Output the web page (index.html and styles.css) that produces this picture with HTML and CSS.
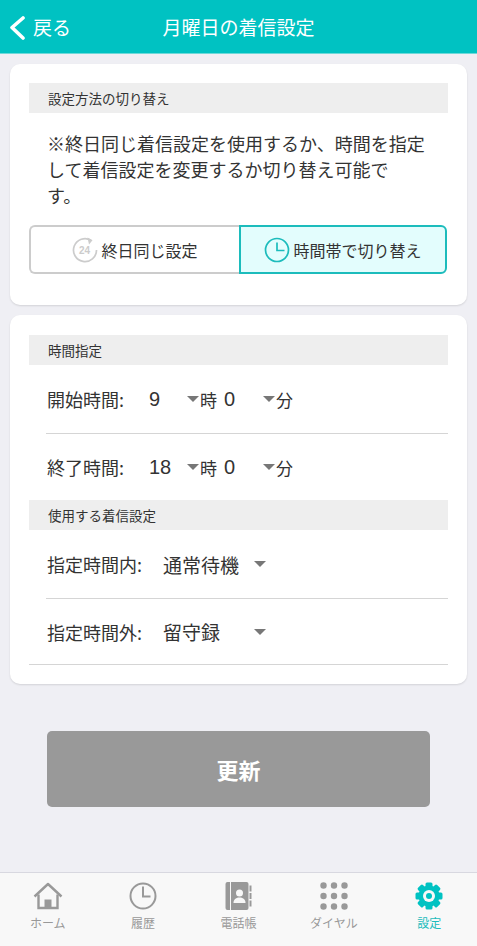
FILE: index.html
```html
<!DOCTYPE html>
<html lang="ja">
<head>
<meta charset="utf-8">
<title>月曜日の着信設定</title>
<link rel="stylesheet" href="styles.css">
</head>
<body>
<div class="app">
  <header class="topbar">
    <a class="back">
      <svg class="back-icon" width="16" height="26" viewBox="0 0 16 26"><path d="M14 4 3 13.500 14 24" fill="none" stroke="#fff" stroke-width="3.600" stroke-linecap="round" stroke-linejoin="round"/></svg>
      <span>戻る</span>
    </a>
    <h1 class="title">月曜日の着信設定</h1>
  </header>
  <main class="content">
    <section class="card card-mode">
      <h2 class="section-head">設定方法の切り替え</h2>
      <p class="note">※終日同じ着信設定を使用するか、時間を指定<br>して着信設定を変更するか切り替え可能で<br>す。</p>
      <div class="segment">
        <div class="seg seg-off">
          <svg width="26" height="26" viewBox="0 0 26 26"><path d="M19 3.300A11.500 11.500 0 1 0 24.500 13" fill="none" stroke="#ccc" stroke-width="1.700"/><path d="M15.500 0.500 20.500 3.300 17 7.500z" fill="#ccc"/><text x="12.500" y="17" class="icon-24">24</text></svg>
          <span>終日同じ設定</span>
        </div>
        <div class="seg seg-on">
          <svg width="26" height="26" viewBox="0 0 26 26"><circle cx="13" cy="13" r="11.500" fill="none" stroke="#1cbcbc" stroke-width="1.700"/><path d="M13 5.500V13.500h7.500" fill="none" stroke="#1cbcbc" stroke-width="1.700"/></svg>
          <span>時間帯で切り替え</span>
        </div>
      </div>
    </section>
    <section class="card card-time">
      <h2 class="section-head">時間指定</h2>
      <div class="row row-time">
        <span class="label">開始時間:</span>
        <span class="val val-num">9</span><i class="caret"></i><span class="unit">時</span>
        <span class="val val-min">0</span><i class="caret"></i><span class="unit">分</span>
      </div>
      <div class="row row-time row-last">
        <span class="label">終了時間:</span>
        <span class="val val-num">18</span><i class="caret"></i><span class="unit">時</span>
        <span class="val val-min">0</span><i class="caret"></i><span class="unit">分</span>
      </div>
      <h2 class="section-head">使用する着信設定</h2>
      <div class="row row-use">
        <span class="label label-use">指定時間内:</span>
        <span class="val val-mode">通常待機</span><i class="caret"></i>
      </div>
      <div class="row row-use row-out">
        <span class="label label-use">指定時間外:</span>
        <span class="val val-mode">留守録</span><i class="caret"></i>
      </div>
    </section>
    <div class="action"><button class="update">更新</button></div>
  </main>
  <nav class="tabbar">
    <div class="tab">
      <svg width="30" height="28" viewBox="0 0 30 28"><path d="M1.500 14.500 15 2l13.500 12.500" fill="none" stroke="#999" stroke-width="2.400" stroke-linejoin="round"/><path d="M5.500 12.500V26h19V12.500" fill="none" stroke="#999" stroke-width="2.400"/><rect x="11.500" y="17.500" width="7" height="8" fill="#999"/></svg>
      <span>ホーム</span>
    </div>
    <div class="tab">
      <svg width="28" height="28" viewBox="0 0 28 28"><circle cx="14" cy="14" r="12.500" fill="none" stroke="#999" stroke-width="2"/><path d="M14 4.500V14.500h7.500" fill="none" stroke="#999" stroke-width="2"/></svg>
      <span>履歴</span>
    </div>
    <div class="tab">
      <svg width="28" height="28" viewBox="0 0 28 28"><path d="M6 0v28H3.500a2 2 0 0 1-2-2V2a2 2 0 0 1 2-2z" fill="#999"/><path d="M7 0h15.500a2 2 0 0 1 2 2v24a2 2 0 0 1-2 2H7z" fill="#999"/><circle cx="15.500" cy="11" r="3.500" fill="#f8f8f8"/><path d="M9.500 21c0-4 3-5.500 6-5.500s6 1.500 6 5.500z" fill="#f8f8f8"/><path d="M26.500 3.500v6M26.500 11v6M26.500 18.500v6" stroke="#999" stroke-width="2"/></svg>
      <span>電話帳</span>
    </div>
    <div class="tab">
      <svg width="28" height="28" viewBox="0 0 28 28" fill="#999"><circle cx="3.500" cy="3.500" r="3.200"/><circle cx="14" cy="3.500" r="3.200"/><circle cx="24.500" cy="3.500" r="3.200"/><circle cx="3.500" cy="14" r="3.200"/><circle cx="14" cy="14" r="3.200"/><circle cx="24.500" cy="14" r="3.200"/><circle cx="3.500" cy="24.500" r="3.200"/><circle cx="14" cy="24.500" r="3.200"/><circle cx="24.500" cy="24.500" r="3.200"/></svg>
      <span>ダイヤル</span>
    </div>
    <div class="tab tab-on">
      <svg width="28" height="28" viewBox="0 0 28 28"><g fill="#00c2c2"><rect x="10.500" y="0.500" width="7" height="27" rx="1.500"/><rect x="10.500" y="0.500" width="7" height="27" rx="1.500" transform="rotate(45 14 14)"/><rect x="10.500" y="0.500" width="7" height="27" rx="1.500" transform="rotate(90 14 14)"/><rect x="10.500" y="0.500" width="7" height="27" rx="1.500" transform="rotate(135 14 14)"/><circle cx="14" cy="14" r="10.500"/></g><circle cx="14" cy="14" r="6" fill="#f8f8f8"/><circle cx="14" cy="14" r="3" fill="#00c2c2"/></svg>
      <span>設定</span>
    </div>
  </nav>
</div>
</body>
</html>
```
FILE: styles.css
```css
* { box-sizing: border-box; }
html, body { margin: 0; padding: 0; }
body {
  background: #efeff4;
  font-family: "Noto Sans CJK JP", "Noto Sans", sans-serif;
  color: #333;
}
.app {
  width: 477px;
  height: 946px;
  display: flex;
  flex-direction: column;
  overflow: hidden;
}
.topbar {
  height: 54px;
  flex: none;
  background: #00c2c2;
  border-bottom: 1px solid #6fd9d9;
  display: flex;
  align-items: center;
  justify-content: center;
  position: relative;
  color: #fff;
}
.back {
  position: absolute;
  left: 9px;
  top: 14px;
  display: flex;
  align-items: center;
  gap: 8px;
  font-size: 19px;
  line-height: 26px;
}
.title {
  margin: 0;
  font-size: 19px;
  font-weight: 400;
  line-height: 26px;
}
.content {
  flex: 1;
  padding: 10px 10px 0;
  display: flex;
  flex-direction: column;
  gap: 10px;
}
.card {
  background: #fff;
  border-radius: 10px;
  padding: 19px 19px 0;
  box-shadow: 0 1px 2px rgba(0, 0, 0, 0.12);
}
.card-mode { height: 241px; }
.card-time { height: 369px; padding-top: 20px; }
.section-head {
  margin: 0;
  height: 30px;
  background: #eee;
  padding-left: 19px;
  font-size: 13.500px;
  font-weight: 400;
  line-height: 30px;
  color: #333;
}
.note {
  margin: 0;
  padding: 17px 0 0 18px;
  height: 112px;
  font-size: 18px;
  line-height: 26px;
  color: #333;
}
.segment {
  display: grid;
  grid-template-columns: 210px 208px;
  height: 49px;
}
.seg {
  display: flex;
  align-items: center;
  justify-content: center;
  gap: 3px;
  font-size: 16px;
  border: 2px solid #ccc;
}
.seg-off { border-right: 0; border-radius: 6px 0 0 6px; }
.seg-on { border-color: #1cbcbc; background: #e3fdfd; border-radius: 0 6px 6px 0; }
.icon-24 {
  font-size: 10px;
  font-family: "Liberation Sans", sans-serif;
  font-weight: 700;
  fill: #ccc;
  text-anchor: middle;
}
.row {
  display: flex;
  align-items: center;
  font-size: 18px;
  color: #333;
}
.row-time {
  height: 69px;
  margin-left: 17px;
  border-bottom: 1px solid #d5d5d5;
}
.row-last { height: 66px; border-bottom: 0; }
.label { width: 103px; padding-left: 1px; }
.label-use { width: 117px; }
.val-num { width: 38px; font-family: "Liberation Sans", sans-serif; font-size: 20px; }
.val-min { width: 39px; margin-left: 7px; font-family: "Liberation Sans", sans-serif; font-size: 20px; }
.unit { font-size: 17px; margin-left: 1px; }
.caret {
  width: 0;
  height: 0;
  border-left: 6px solid transparent;
  border-right: 6px solid transparent;
  border-top: 6px solid #777;
}
.row-use {
  height: 69px;
  margin-left: 17px;
  border-bottom: 1px solid #d5d5d5;
}
.row-out { margin-left: 0; padding-left: 17px; height: 66px; }
.val-mode { width: 91px; font-size: 19px; }
.action {
  padding: 37px 37px 0;
}
.update {
  width: 383px;
  height: 76px;
  border: 0;
  border-radius: 5px;
  background: #999;
  color: #fff;
  font-family: inherit;
  font-size: 22px;
  font-weight: 700;
}
.tabbar {
  flex: none;
  height: 74px;
  background: #f8f8f8;
  border-top: 1px solid #d8d8e0;
  display: flex;
  padding: 9px 0 0 0;
}
.tab {
  width: 95.400px;
  display: flex;
  flex-direction: column;
  align-items: center;
  font-size: 12px;
  line-height: 18px;
  color: #999;
  gap: 4px;
}
.tab-on { color: #1cbcbc; }
```
